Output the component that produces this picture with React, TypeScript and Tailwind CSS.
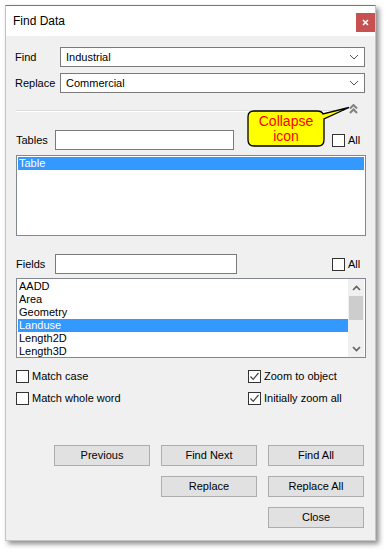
import React from 'react'

const font = { fontFamily: '"Liberation Sans", Arial, sans-serif' }

function ComboBox({ value }: { value: string }) {
  return (
    <div className="flex items-center w-[305px] h-[20px] bg-white border border-[#7a7a7a]">
      <span className="flex-1 pl-[5px] text-[11px] leading-none text-black">{value}</span>
      <svg className="mr-[5px]" width="10" height="6" viewBox="0 0 10 6">
        <path d="M1 1 L5 5 L9 1" fill="none" stroke="#555" strokeWidth="1" />
      </svg>
    </div>
  )
}

function CheckBox({ label, checked = false }: { label: string; checked?: boolean }) {
  return (
    <div className="flex items-center h-[13px]">
      <div className="w-[13px] h-[13px] bg-white border border-[#333] flex items-center justify-center">
        {checked && (
          <svg width="11" height="11" viewBox="0 0 11 11">
            <path d="M1.5 5.5 L4.2 8.3 L9.5 2" fill="none" stroke="#444" strokeWidth="1.2" />
          </svg>
        )}
      </div>
      <span className="ml-[3px] text-[11px] leading-none text-black">{label}</span>
    </div>
  )
}

function Btn({ children }: { children: React.ReactNode }) {
  return (
    <button className="w-[96px] h-[21px] bg-[#e1e1e1] border border-[#adadad] text-[11px] leading-none text-black">
      {children}
    </button>
  )
}

const fields = ['AADD', 'Area', 'Geometry', 'Landuse', 'Length2D', 'Length3D']

export default function App() {
  return (
    <div className="w-[387px] h-[552px] bg-white pt-[5px] pl-[5px]" style={font}>
      <div className="relative w-[371px] h-[536px] border border-[#c4c4c4] border-t-[#2b87d8] shadow-[3px_3px_5px_rgba(0,0,0,0.45)] flex flex-col">
        {/* title bar */}
        <div className="h-[30px] bg-white flex items-start">
          <span className="pl-[7px] mt-[8px] text-[12px] leading-[14px] text-black">Find Data</span>
          <div className="ml-auto mt-[7px] w-[19px] h-[19px] bg-[#c75050] flex items-center justify-center">
            <svg width="7" height="7" viewBox="0 0 7 7">
              <path d="M1 1 L6 6 M6 1 L1 6" stroke="white" strokeWidth="1.6" />
            </svg>
          </div>
        </div>

        <div className="flex-1 bg-[#f0f0f0] pl-[10px] pt-[11px]">
          <div className="flex items-center h-[20px]">
            <span className="w-[45px] -ml-[1px] text-[11px] text-black">Find</span>
            <ComboBox value="Industrial" />
          </div>
          <div className="flex items-center h-[20px] mt-[6px]">
            <span className="w-[45px] -ml-[1px] text-[11px] text-black">Replace</span>
            <ComboBox value="Commercial" />
          </div>

          {/* separator + collapse */}
          <div className="flex items-start h-[16px] mt-[7px]">
            <div className="w-[329px] mt-[10px] h-[2px] border-t border-[#dcdcdc] border-b border-b-white" />
            <svg className="ml-[4px] mt-[4px]" width="9" height="10" viewBox="0 0 9 10">
              <path d="M1 4.5 L4.5 1 L8 4.5 M1 9 L4.5 5.5 L8 9" fill="none" stroke="#808080" strokeWidth="2" />
            </svg>
          </div>

          {/* tables */}
          <div className="flex items-center h-[20px] mt-[14px]">
            <span className="w-[39px] text-[11px] text-black">Tables</span>
            <div className="w-[179px] h-[20px] bg-white border border-[#7a7a7a]" />
            <div className="ml-[98px]">
              <CheckBox label="All" />
            </div>
          </div>
          <div className="mt-[5px] w-[350px] h-[81px] bg-white border border-[#828790] p-px">
            <div className="h-[13px] bg-[#3399ff] text-white text-[11px] leading-[13px] pl-[1px]">Table</div>
          </div>

          {/* fields */}
          <div className="flex items-center h-[20px] mt-[18px]">
            <span className="w-[39px] text-[11px] text-black">Fields</span>
            <div className="w-[182px] h-[20px] bg-white border border-[#7a7a7a]" />
            <div className="ml-[95px]">
              <CheckBox label="All" />
            </div>
          </div>
          <div className="mt-[4px] w-[350px] h-[80px] bg-white border border-[#828790] flex overflow-hidden">
            <div className="flex-1 pt-[1px] pl-[1px] overflow-hidden">
              {fields.map((f) => (
                <div
                  key={f}
                  className={`h-[13px] pl-[1px] text-[11px] leading-[13px] ${
                    f === 'Landuse' ? 'bg-[#3399ff] text-white' : 'text-black'
                  }`}
                >
                  {f}
                </div>
              ))}
            </div>
            <div className="w-[16px] mr-[1px] bg-[#f0f0f0] flex flex-col">
              <div className="h-[17px] flex items-center justify-center">
                <svg width="9" height="6" viewBox="0 0 9 6">
                  <path d="M1 5 L4.5 1.5 L8 5" fill="none" stroke="#606060" strokeWidth="1.6" />
                </svg>
              </div>
              <div className="h-[24px] mx-[1px] bg-[#cdcdcd]" />
              <div className="flex-1" />
              <div className="h-[17px] flex items-center justify-center">
                <svg width="9" height="6" viewBox="0 0 9 6">
                  <path d="M1 1 L4.5 4.5 L8 1" fill="none" stroke="#606060" strokeWidth="1.6" />
                </svg>
              </div>
            </div>
          </div>

          {/* options */}
          <div className="flex mt-[12px]">
            <div className="w-[232px]">
              <CheckBox label="Match case" />
            </div>
            <CheckBox label="Zoom to object" checked />
          </div>
          <div className="flex mt-[9px]">
            <div className="w-[232px]">
              <CheckBox label="Match whole word" />
            </div>
            <CheckBox label="Initially zoom all" checked />
          </div>

          {/* buttons */}
          <div className="grid grid-cols-[96px_96px_96px] gap-x-[11px] gap-y-[10px] mt-[40px] ml-[38px]">
            <Btn>Previous</Btn>
            <Btn>Find Next</Btn>
            <Btn>Find All</Btn>
            <div />
            <Btn>Replace</Btn>
            <Btn>Replace All</Btn>
            <div />
            <div />
            <Btn>Close</Btn>
          </div>
        </div>

        {/* callout annotation */}
        <svg className="absolute left-[240px] top-[100px]" width="108" height="44" viewBox="0 0 108 44">
          <path
            d="M8 5 L71 5 Q76 5 77 8 L103 1.5 L78 13 L78 34 Q78 40 72 40 L8 40 Q2 40 2 34 L2 11 Q2 5 8 5 Z"
            fill="#ffff00"
            stroke="#000"
            strokeWidth="1.3"
          />
        </svg>
        <div className="absolute left-[242px] top-[105px] w-[76px] h-[35px] flex flex-col items-center justify-center text-[14px] leading-[15px] text-[#ff0000]">
          <span>Collapse</span>
          <span>icon</span>
        </div>
      </div>
    </div>
  )
}
